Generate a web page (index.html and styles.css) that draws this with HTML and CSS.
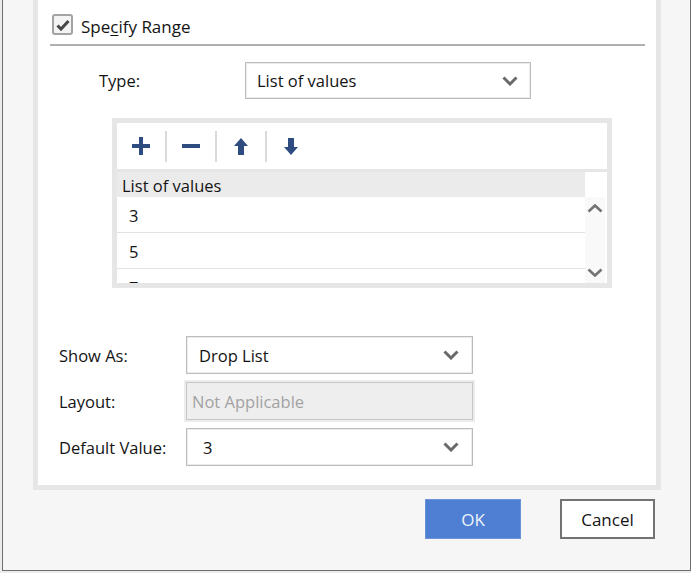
FILE: index.html
```html
<!DOCTYPE html>
<html lang="en">
<head>
<meta charset="utf-8">
<title>Specify Range</title>
<link rel="stylesheet" href="styles.css">
</head>
<body>
<div class="window">
  <div class="panel">
    <label class="check-row">
      <span class="checkbox">
        <svg width="16" height="16" viewBox="0 0 16 16"><polyline points="2.5,8.5 6,12 13.5,4" fill="none" stroke="#474747" stroke-width="3"/></svg>
      </span>
      <span class="check-label">Spe<u>c</u>ify Range</span>
    </label>
    <div class="sep"></div>

    <div class="type-row">
      <span class="type-label">Type:</span>
      <div class="combo type-combo">
        <span class="combo-text">List of values</span>
        <svg class="chev" width="16" height="10" viewBox="0 0 16 10"><polyline points="1.5,1.5 8,8 14.5,1.5" fill="none" stroke="#6a6a6a" stroke-width="3"/></svg>
      </div>
    </div>

    <div class="listbox">
      <div class="toolbar">
        <div class="tb-btn">
          <svg width="18" height="18" viewBox="0 0 18 18"><rect x="0" y="7" width="18" height="4" fill="#2f4c80"/><rect x="7" y="0" width="4" height="18" fill="#2f4c80"/></svg>
        </div>
        <div class="tb-sep"></div>
        <div class="tb-btn">
          <svg width="18" height="4" viewBox="0 0 18 4"><rect x="0" y="0" width="18" height="4" fill="#2f4c80"/></svg>
        </div>
        <div class="tb-sep"></div>
        <div class="tb-btn">
          <svg width="14" height="17" viewBox="0 0 14 17"><polygon points="7,0 14,8 10,8 10,17 4,17 4,8 0,8" fill="#2f4c80"/></svg>
        </div>
        <div class="tb-sep"></div>
        <div class="tb-btn">
          <svg width="14" height="17" viewBox="0 0 14 17"><polygon points="7,17 14,9 10,9 10,0 4,0 4,9 0,9" fill="#2f4c80"/></svg>
        </div>
      </div>
      <div class="list-body">
        <div class="list-main">
          <div class="list-header">List of values</div>
          <div class="list-row">3</div>
          <div class="list-row">5</div>
          <div class="list-row">7</div>
        </div>
        <div class="scroll-col">
          <div class="scroll-top"></div>
          <div class="scroll-track">
            <svg width="16" height="9" viewBox="0 0 16 9"><polyline points="1.5,7.5 8,1.5 14.5,7.5" fill="none" stroke="#737373" stroke-width="2.6"/></svg>
            <svg width="16" height="9" viewBox="0 0 16 9"><polyline points="1.5,1.5 8,7.5 14.5,1.5" fill="none" stroke="#737373" stroke-width="2.6"/></svg>
          </div>
        </div>
      </div>
    </div>

    <div class="fields">
      <div class="field-row">
        <span class="field-label">Show As:</span>
        <div class="combo field-combo">
          <span class="combo-text">Drop List</span>
          <svg class="chev" width="16" height="10" viewBox="0 0 16 10"><polyline points="1.5,1.5 8,8 14.5,1.5" fill="none" stroke="#6a6a6a" stroke-width="3"/></svg>
        </div>
      </div>
      <div class="field-row">
        <span class="field-label">Layout:</span>
        <div class="combo field-combo disabled">
          <span class="combo-text">Not Applicable</span>
        </div>
      </div>
      <div class="field-row">
        <span class="field-label">Default Value:</span>
        <div class="combo field-combo">
          <span class="combo-text num">3</span>
          <svg class="chev" width="16" height="10" viewBox="0 0 16 10"><polyline points="1.5,1.5 8,8 14.5,1.5" fill="none" stroke="#6a6a6a" stroke-width="3"/></svg>
        </div>
      </div>
    </div>
  </div>

  <div class="buttons">
    <button class="btn btn-ok">OK</button>
    <button class="btn btn-cancel">Cancel</button>
  </div>
</div>
</body>
</html>
```

FILE: styles.css
```css
html, body {
  margin: 0;
  padding: 0;
}
body {
  background: #ececec;
  font-family: "Segoe UI", "Open Sans", "Noto Sans", sans-serif;
  font-size: 16.5px;
  color: #141414;
  width: 691px;
  height: 573px;
  overflow: hidden;
}
.window {
  margin-left: 2px;
  width: 687px;
  height: 570px;
  background: #f6f6f6;
  border-left: 1px solid #6e6e6e;
  border-right: 1px solid #6e6e6e;
  border-bottom: 1px solid #6e6e6e;
  display: flex;
  flex-direction: column;
}
.panel {
  margin-left: 30px;
  width: 618px;
  height: 471px;
  background: #ffffff;
  border: 5px solid #e6e6e6;
  border-top: none;
  padding-top: 14px;
}
.check-row {
  display: flex;
  align-items: center;
  gap: 8px;
  margin-left: 14px;
  height: 21px;
}
.checkbox {
  width: 17px;
  height: 17px;
  border: 2px solid #a3a3a3;
  border-radius: 3px;
  background: #f4f4f4;
  display: flex;
  align-items: center;
  justify-content: center;
}
.check-label {
  font-size: 17px;
  padding-top: 3px;
}
.check-label u {
  text-decoration-thickness: 1px;
  text-underline-offset: 2px;
}
.sep {
  margin: 9px 11px 0 12px;
  height: 2px;
  background: #b0b0b0;
}
.type-row {
  display: flex;
  align-items: center;
  margin-top: 16px;
  margin-left: 61px;
}
.type-label {
  width: 146px;
}
.combo {
  box-sizing: border-box;
  display: flex;
  align-items: center;
  justify-content: space-between;
  border: 1px solid #bcbcbc;
  box-shadow: inset 0 0 0 1px #ececec;
  background: #ffffff;
}
.type-combo {
  width: 286px;
  height: 37px;
  padding: 0 12px 0 11px;
}
.combo-text {
  white-space: nowrap;
}
.listbox {
  margin-top: 19px;
  margin-left: 74px;
  width: 490px;
  height: 160px;
  border: 5px solid #e6e6e6;
  background: #ffffff;
  display: flex;
  flex-direction: column;
}
.toolbar {
  height: 46px;
  border-bottom: 3px solid #e6e6e6;
  display: flex;
  align-items: center;
}
.tb-btn {
  width: 48px;
  height: 46px;
  display: flex;
  align-items: center;
  justify-content: center;
}
.tb-sep {
  width: 2px;
  height: 31px;
  background: #dadada;
}
.list-body {
  display: flex;
  height: 111px;
  overflow: hidden;
}
.list-main {
  flex: 1;
  overflow: hidden;
}
.list-header {
  height: 25px;
  line-height: 27px;
  background: #ebebeb;
  padding-left: 5px;
}
.list-row {
  height: 35px;
  line-height: 37px;
  border-bottom: 1px solid #e2e2e2;
  padding-left: 12px;
  overflow: hidden;
}
.scroll-col {
  width: 22px;
  display: flex;
  flex-direction: column;
}
.scroll-top {
  height: 25px;
  background: #ffffff;
}
.scroll-track {
  flex: 1;
  margin-right: 2px;
  background: #f9f9f9;
  display: flex;
  flex-direction: column;
  align-items: center;
  justify-content: space-between;
  padding: 7px 0 6px;
}
.fields {
  margin-top: 48px;
  margin-left: 21px;
  display: flex;
  flex-direction: column;
  gap: 8px;
}
.field-row {
  display: flex;
  align-items: center;
}
.field-label {
  width: 127px;
}
.field-combo {
  width: 287px;
  height: 38px;
  padding: 0 13px 0 12px;
}
.field-combo.disabled {
  background: #eeeeee;
  border-color: #c6c6c6;
  box-shadow: 0 0 0 2px #ececec;
  color: #a2a2a2;
  padding-left: 5px;
}
.combo-text.num {
  padding-left: 4px;
}
.buttons {
  display: flex;
  justify-content: flex-end;
  gap: 39px;
  margin-top: 9px;
  margin-right: 35px;
}
.btn {
  font-family: inherit;
  font-size: 17px;
  height: 40px;
  box-sizing: border-box;
  padding: 0;
  cursor: default;
}
.btn-ok {
  width: 96px;
  background: #4f7fd2;
  color: #eef3fc;
  border: 1px solid #6b93da;
}
.btn-cancel {
  width: 95px;
  background: #ffffff;
  color: #141414;
  border: 2px solid #737373;
}
```
